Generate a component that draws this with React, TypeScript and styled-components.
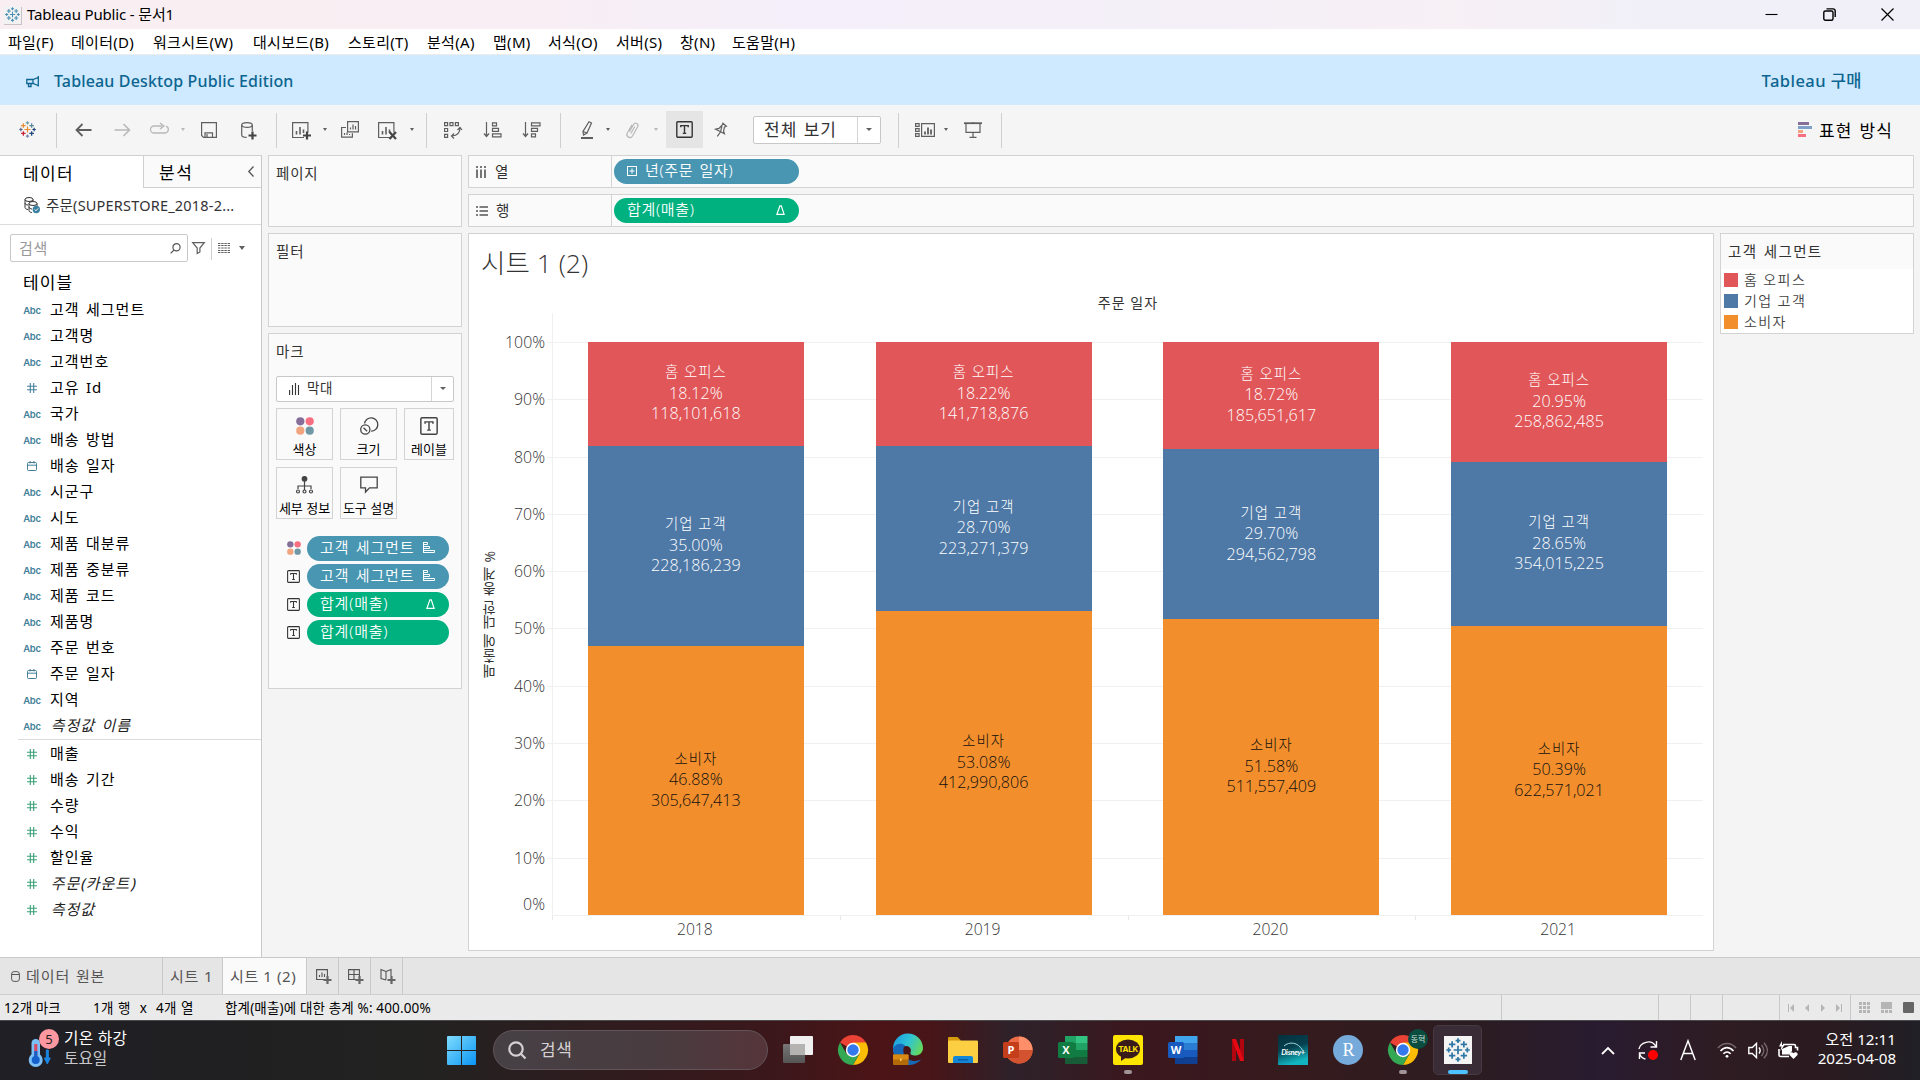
import React from "react";
import styled, { createGlobalStyle, css } from "styled-components";

const UI = `"Noto Sans", "Noto Sans CJK KR", sans-serif`;
const LIGHT = `"Open Sans", "Noto Sans CJK KR", sans-serif`;

const Global = createGlobalStyle`
  * { box-sizing: border-box; }
  body { margin: 0; overflow: hidden; background: #f4f4f4; font-family: ${UI}; }
  svg { display: block; flex: none; overflow: visible; }
`;

const Screen = styled.div`
  width: 1920px; height: 1080px; display: flex; flex-direction: column;
  overflow: hidden; background: #f4f4f4; color: #000;
`;

const Label = styled.span<{ $size?: number; $ls?: number; $ws?: number; $color?: string; $ml?: number; $up?: number; $weight?: number; $italic?: boolean }>`
  font-size: ${p => p.$size ?? 15}px;
  line-height: 1;
  height: 1em;
  white-space: pre;
  flex: none;
  letter-spacing: ${p => p.$ls ?? 0}px;
  word-spacing: ${p => p.$ws ?? 0}px;
  color: ${p => p.$color ?? "inherit"};
  margin-left: ${p => p.$ml ?? 0}px;
  margin-bottom: ${p => p.$up ?? 0}px;
  font-weight: ${p => p.$weight ?? 400};
  ${p => p.$italic && css`transform: skewX(-14deg);`}
`;

/* ---------- window chrome ---------- */
const TitleBar = styled.header`
  height: 29px; flex: none; display: flex; align-items: center; justify-content: space-between;
  padding: 0 26px 0 3px;
  background: linear-gradient(90deg, #f9eef1 0, #f9eef3 500px, #f4effa 800px, #f4f0f8 1150px, #f7f0f5 1450px, #f1f0f8 1650px, #f1f0f8 100%);
`;
const Group = styled.div<{ $gap?: number; $pl?: number }>`
  display: flex; align-items: center; gap: ${p => p.$gap ?? 0}px; padding-left: ${p => p.$pl ?? 0}px;
`;
const AppTile = styled.div`
  width: 18px; height: 18px; background: #f2f2f2; box-shadow: 1px 1px 0 #c9c3c5;
  display: flex; align-items: center; justify-content: center;
`;
const MenuBar = styled.nav`
  height: 26px; flex: none; display: flex; align-items: center; padding-left: 8px;
  background: #fff; border-bottom: 1px solid #ececec;
`;
const MenuItem = styled.span<{ $w: number }>`
  width: ${p => p.$w}px; flex: none; font-size: 15px; line-height: 24px; letter-spacing: 0.3px; white-space: nowrap;
`;
const Banner = styled.div`
  height: 50px; flex: none; display: flex; align-items: center; justify-content: space-between;
  padding: 2px 58px 0 26px; background: #cfe9fe; color: #0b6590;
`;

/* ---------- toolbar ---------- */
const Toolbar = styled.div`
  height: 50px; flex: none; display: flex; align-items: center; background: #f5f5f5; padding-bottom: 1px;
`;
const Tool = styled.div<{ $ml: number; $dim?: boolean; $y?: number }>`
  flex: none; margin-left: ${p => p.$ml}px; color: ${p => (p.$dim ? "#b8b8b8" : "#5f5f5f")};
  padding-top: ${p => p.$y ?? 0}px;
`;
const Rule = styled.i<{ $ml: number; $h?: number }>`
  width: 1px; height: ${p => p.$h ?? 35}px; margin-left: ${p => p.$ml}px; background: #cfcfcf; flex: none;
  margin-top: 2px;
`;
const Caret = styled.i<{ $ml?: number; $dim?: boolean; $s?: number }>`
  width: 0; height: 0; flex: none; margin-left: ${p => p.$ml ?? 0}px;
  border: ${p => p.$s ?? 2.5}px solid transparent; border-bottom: 0;
  border-top: ${p => (p.$s ?? 2.5) + 0.5}px solid ${p => (p.$dim ? "#b8b8b8" : "#5f5f5f")};
`;
const ActiveTool = styled.div`
  width: 37px; height: 37px; margin-left: 8px; background: #e5e5e5; flex: none;
  display: flex; align-items: center; justify-content: center; color: #333;
`;
const Combo = styled.div<{ $w: number; $h: number; $ml?: number; $mt?: number; $cell: number }>`
  width: ${p => p.$w}px; height: ${p => p.$h}px; margin-left: ${p => p.$ml ?? 0}px; margin-top: ${p => p.$mt ?? 0}px; flex: none;
  display: flex; justify-content: space-between; background: #fff; border: 1px solid #c8c8c8; border-radius: 2px; color: #333;
  & > div:last-child { width: ${p => p.$cell}px; border-left: 1px solid #d4d4d4; display: flex; align-items: center; justify-content: center; }
`;

/* ---------- workspace ---------- */
const Workspace = styled.main`
  height: 802px; flex: none; display: flex;
`;
const Side = styled.aside`
  width: 262px; flex: none; background: #fff; border-right: 1px solid #c9c9c9; border-top: 1px solid #d0d0d0;
  display: flex; flex-direction: column;
`;
const SideTabs = styled.div`
  height: 32px; flex: none; display: flex;
`;
const SideTab = styled.div<{ $active?: boolean; $w: number }>`
  width: ${p => p.$w}px; display: flex; align-items: center; justify-content: space-between; padding: 2px 7px 0 ${p => (p.$active ? 23 : 15)}px;
  ${p => !p.$active && css`background: #fafafa; border-left: 1px solid #d0d0d0; border-bottom: 1px solid #d0d0d0;`}
  svg { color: #555; margin-bottom: 3px; }
`;
const SourceRow = styled.div`
  height: 37px; flex: none; display: flex; align-items: center; padding: 0 0 2px 24px; gap: 6px; border-bottom: 1px solid #dcdcdc; color: #333;
`;
const SearchRow = styled.div`
  height: 28px; margin: 9px 0 0 10px; flex: none; display: flex; align-items: center;
`;
const SearchBox = styled.div`
  width: 178px; height: 28px; border: 1px solid #c8c8c8; border-radius: 2px; padding: 0 6px 0 8px;
  display: flex; align-items: center; justify-content: space-between; color: #555;
`;
const TableHead = styled.div`
  height: 35px; flex: none; padding: 10px 0 0 23px;
`;
const FieldRow = styled.div`
  height: 26px; flex: none; display: flex; align-items: center;
`;
const FieldIcon = styled.div`
  width: 50px; padding-left: 14px; display: flex; justify-content: center; flex: none;
`;
const Abc = styled.span`
  font: 600 9.5px/10px "Inter", sans-serif; color: #447f99; letter-spacing: -0.3px; padding-top: 1px;
`;
const Divider = styled.i`
  height: 1px; margin: 0 0 1px 18px; background: #dcdcdc; flex: none;
`;

const Cards = styled.section`
  width: 194px; margin-left: 6px; flex: none; display: flex; flex-direction: column; gap: 6px;
`;
const Card = styled.div<{ $h: number }>`
  height: ${p => p.$h}px; flex: none; border: 1px solid #d3d3d3; background: #fafafa; color: #333;
  display: flex; flex-direction: column; align-items: flex-start; padding: 10px 0 0 7px;
`;
const MarkGrid = styled.div`
  display: grid; grid-template-columns: 57px 57px 50px; grid-auto-rows: 52px; gap: 7px; margin: 6px 0 17px;
`;
const MarkButton = styled.div`
  border: 1px solid #d3d3d3; display: flex; flex-direction: column; align-items: center; justify-content: space-between; padding: 8px 0 3px; color: #444;
`;
const Encodings = styled.div`
  display: flex; flex-direction: column; gap: 3px; padding-left: 11px;
`;
const Encoding = styled.div`
  display: grid; grid-template-columns: 20px 142px; align-items: center;
`;
const Pill = styled.div<{ $green?: boolean; $w: number }>`
  width: ${p => p.$w}px; height: 25px; border-radius: 13px; padding: 0 12px 2px 13px;
  background: ${p => (p.$green ? "#00b180" : "#4996b2")}; color: #fff;
  display: flex; align-items: center; justify-content: space-between;
`;
const PillMark = styled.div`
  margin-right: 2px; padding-top: 1px;
`;

const Canvas = styled.section`
  margin-left: 6px; width: 1446px; flex: none; display: flex; flex-direction: column; gap: 6px;
`;
const Shelf = styled.div`
  height: 33px; flex: none; border: 1px solid #d3d3d3; background: #fafafa; display: flex; align-items: center; color: #333;
`;
const ShelfName = styled.div`
  width: 143px; height: 100%; border-right: 1px solid #d3d3d3; display: flex; align-items: center; gap: 9px; padding-left: 7px; margin-right: 2px;
  svg { color: #555; }
`;
const VizRow = styled.div`
  display: flex; gap: 6px; align-items: flex-start;
`;
const Viz = styled.div`
  width: 1246px; height: 718px; border: 1px solid #d3d3d3; background: #fff; flex: none;
  display: flex; flex-direction: column; font-family: ${LIGHT};
`;
const VizTitle = styled.h1`
  margin: 9px 0 1px 12px; height: 40px; font: 300 26.5px/40px ${LIGHT}; color: #333; white-space: pre;
`;
const ColumnHeader = styled.div`
  height: 29px; padding: 8px 0 0 84px; width: 1234px; text-align: center; font-size: 14px; line-height: 22px; letter-spacing: 1.1px; color: #333;
`;
const ChartRow = styled.div`
  display: flex; height: 602px;
`;
const AxisTitle = styled.div`
  width: 30px; margin-left: 6px; writing-mode: vertical-rl; transform: rotate(180deg); text-align: center; line-height: 30px;
  font-size: 14px; letter-spacing: .65px; color: #333;
`;
const AxisLabels = styled.div`
  width: 40px; height: 602px; display: flex; flex-direction: column; padding-top: 1px; text-align: right;
  font-weight: 300; font-size: 15.9px; color: #333;
`;
const AxisLabel = styled.div<{ $last?: boolean }>`
  height: 57.3px; line-height: 57.3px; margin-top: ${p => (p.$last ? -11 : 0)}px; flex: none;
`;
const Plot = styled.div`
  width: 1156px; margin-left: 2px; height: 602px; padding: 29px 0 0 5px; flex: none;
  background:
    linear-gradient(#f0f0f0, #f0f0f0) 5px 0 / 1px 100% no-repeat,
    repeating-linear-gradient(180deg, #f0f0f0 0, #f0f0f0 1px, transparent 1px, transparent 57.3px) 0 29px / 100% 100% no-repeat;
`;
const Bars = styled.div`
  display: grid; grid-template-columns: repeat(4, 1fr); height: 573px; width: 1151px;
`;
const Stack = styled.div`
  width: 216px; justify-self: center; display: flex; flex-direction: column;
`;
const Segment = styled.div<{ $c: string; $dark?: boolean; $pct: number }>`
  flex: ${p => p.$pct} 0 0; background: ${p => p.$c}; color: ${p => (p.$dark ? "#111" : "#fff")};
  display: flex; flex-direction: column; align-items: center; justify-content: center;
  font-weight: 300; font-size: 16.1px; line-height: 20.5px;
  span { font-size: 14.4px; letter-spacing: 1px; }
  div:last-child { margin-bottom: 2px; }
`;
const Years = styled.div`
  display: grid; grid-template-columns: repeat(4, 1fr); margin-left: 83px; width: 1151px; border-top: 1px solid #f0f0f0;
`;
const Year = styled.div`
  text-align: center; font-weight: 300; font-size: 15.7px; line-height: 26px; color: #333; padding-right: 2px;
  background: linear-gradient(#e8e8e8, #e8e8e8) 0 0 / 1px 4px no-repeat;
`;
const Legend = styled.div`
  width: 194px; height: 101px; border: 1px solid #d3d3d3; background: #fff; flex: none; color: #333;
`;
const LegendHead = styled.div`
  height: 35px; background: #fafafa; padding: 0 0 0 7px; display: flex; align-items: center;
`;
const LegendItem = styled.div`
  height: 21px; display: flex; align-items: center; padding-left: 3px; gap: 6px;
`;
const Swatch = styled.i<{ $c: string }>`
  width: 14px; height: 14px; background: ${p => p.$c}; flex: none;
`;

/* ---------- sheet tabs & status ---------- */
const SheetTabs = styled.div`
  height: 37px; flex: none; display: flex; background: #e5e5e5; border-top: 1px solid #c9c9c9;
`;
const SheetTab = styled.div<{ $w: number; $active?: boolean; $pl?: number }>`
  width: ${p => p.$w}px; padding: 0 0 0 ${p => p.$pl ?? 0}px; border-right: 1px solid #c9c9c9; flex: none;
  background: ${p => (p.$active ? "#fafafa" : "transparent")}; color: #555; display: flex; align-items: center; gap: 6px;
`;
const Status = styled.div`
  height: 26px; flex: none; display: flex; align-items: center; background: #eaeaea; border-top: 1px solid #cfcfcf; padding-left: 4px;
`;
const StatusCell = styled.div<{ $w: number; $line?: boolean }>`
  width: ${p => p.$w}px; height: 100%; flex: none; display: flex; align-items: center;
  ${p => p.$line && css`border-left: 1px solid #c9c9c9;`}
`;

/* ---------- taskbar ---------- */
const Taskbar = styled.footer`
  height: 60px; flex: none; display: flex; align-items: center; border-top: 1px solid #4a4a4c; color: #fff; padding-bottom: 1px;
  background: linear-gradient(90deg, #201f26 0, #202022 200px, #222221 420px, #2c1d1f 560px, #3c171b 780px, #4c1416 880px, #481518 930px, #2f2129 1010px, #302028 1040px, #3b171e 1130px, #341b1e 1320px, #2b1c22 1480px, #291b30 1600px, #2e1c22 1720px, #2a1b20 1830px, #202026 1920px);
`;
const Weather = styled.div`
  width: 447px; flex: none; padding-left: 26px; display: flex; align-items: center; gap: 4px;
`;
const TwoLine = styled.div<{ $right?: boolean }>`
  display: flex; flex-direction: column; gap: 4.5px; padding-bottom: 2px; align-items: ${p => (p.$right ? "flex-end" : "flex-start")};
`;
const SearchPill = styled.div`
  width: 275px; height: 40px; margin-left: 17px; flex: none; border-radius: 20px; border: 1px solid #62545a;
  background: linear-gradient(90deg, #464044, #493c40 60%, #55353a); display: flex; align-items: center; padding-left: 14px; gap: 14px; color: #d5d0d2;
`;
const TaskIcons = styled.div`
  display: flex; margin-left: 2px; flex: none;
`;
const TaskIcon = styled.div<{ $active?: boolean }>`
  width: 49px; height: 50px; margin: 0 3px; border-radius: 5px; display: grid; place-items: center; position: relative;
  ${p => p.$active && css`background: #3a2c36; border: 1px solid #463941;`}
`;
const Running = styled.i<{ $on?: boolean }>`
  position: absolute; bottom: ${p => (p.$on ? 0 : 1)}px; left: 50%; transform: translateX(-50%);
  width: ${p => (p.$on ? 20 : 8)}px; height: 4px; border-radius: 2px; background: ${p => (p.$on ? "#4cc2ff" : "#a09498")};
`;
const Badge = styled.span`
  position: absolute; right: -1px; top: 4px; width: 20px; height: 20px; border-radius: 50%; background: #0a4d40; color: #cfe0dc;
  font-size: 8px; line-height: 20px; text-align: center;
`;
const Tray = styled.div`
  flex: 1; display: flex; align-items: center; justify-content: flex-end; padding-right: 24px;
`;
const TrayItem = styled.div<{ $w: number }>`
  width: ${p => p.$w}px; flex: none; display: flex;
`;

/* ---------- drawings ---------- */
const S = (p: { w: number; h: number; children: React.ReactNode; sw?: number }) => (
  <svg width={p.w} height={p.h} viewBox={`0 0 ${p.w} ${p.h}`} fill="none" stroke="currentColor" strokeWidth={p.sw ?? 1.2}>{p.children}</svg>
);

const PLUSES: [number, number, number, string][] = [
  [9, 9, 3.2, "#eb8a30"], [9, 2, 1.8, "#7199a6"], [9, 16, 1.8, "#7b84ae"], [2, 9, 1.8, "#5b6591"], [16, 9, 1.8, "#1f447e"],
  [4.6, 4.8, 2.4, "#eb8a30"], [13.4, 4.8, 2.4, "#59879b"], [4.6, 13.2, 2.4, "#c72035"], [13.4, 13.2, 2.4, "#1f447e"],
];
const TableauMark = ({ size, mono }: { size: number; mono?: string }) => (
  <svg width={size} height={size} viewBox="0 0 18 18" strokeWidth="1.3">
    {PLUSES.map(([x, y, r, c], i) => <path key={i} stroke={mono ?? c} d={`M${x - r} ${y}h${2 * r}M${x} ${y - r}v${2 * r}`} />)}
  </svg>
);
const PlusGlyph = ({ x, y, r = 4, c = "#444" }: { x: number; y: number; r?: number; c?: string }) => (
  <path d={`M${x - r} ${y}h${2 * r}M${x} ${y - r}v${2 * r}`} stroke={c} strokeWidth="2.2" />
);
const TextMark = ({ s = 17 }: { s?: number }) => (
  <svg width={s} height={s} viewBox="0 0 17 17" fill="none" stroke="currentColor" strokeWidth="1.4">
    <rect x=".8" y=".8" width="15.4" height="15.4" rx="1" />
    <path d="M4.8 6.3V4.6h7.4v1.7M8.5 4.6v7.8M6.8 12.4h3.4" />
  </svg>
);
const ColorDots = ({ s = 18 }: { s?: number }) => (
  <svg width={s} height={s} viewBox="0 0 18 18">
    <circle cx="4.3" cy="4.3" r="4.1" fill="#856f99" /><circle cx="13.7" cy="4.3" r="4.1" fill="#f96f82" />
    <circle cx="4.3" cy="13.7" r="4.1" fill="#f2a47e" /><circle cx="13.7" cy="13.7" r="4.1" fill="#6f98a6" />
  </svg>
);
const Hash = ({ c }: { c: string }) => (
  <svg width="10" height="10" viewBox="0 0 10 10" stroke={c} strokeWidth="1.1"><path d="M3.3 0v10M6.7 0v10M0 3.3h10M0 6.7h10" /></svg>
);
const Calendar = () => (
  <svg width="10" height="10" viewBox="0 0 10 10" stroke="#447f99" fill="none"><rect x=".5" y="1.5" width="9" height="8" rx="1" /><path d="M.5 4.2h9M3 0v2.5M7 0v2.5" /></svg>
);
const Delta = () => <PillMark><S w={9} h={10} sw={1.2}><path d="M.9 9.4h7.2L5.3.8H3.9z" /></S></PillMark>;
const SortGlyph = () => <PillMark as="div"><S w={12} h={11} sw={1}><path d="M.5.5h4v2h-4zM.5 4.5h6v2h-6zM.5 8.5h11v2h-11zM.5 0v11" /></S></PillMark>;
const SheetGlyph = () => <><path d="M12 15.5H.6V.6h15.3v10" /><path d="M4.5 12.5V9M8 12.5V5M11.5 11V7.5" strokeWidth="1.6" /></>;

const Chrome = () => (
  <svg width="30" height="30" viewBox="0 0 30 30">
    <path d="M15 15 2 7.5A15 15 0 0 1 28 7.5z" fill="#ea4335" /><path d="M28 7.5A15 15 0 0 1 15 30l6.5-11.3L15 7.5z" fill="#fbbc05" />
    <path d="M15 30A15 15 0 0 1 2 7.5l6.5 11.3L15 22l6.2-3z" fill="#34a853" />
    <circle cx="15" cy="15" r="7.2" fill="#fff" /><circle cx="15" cy="15" r="5.7" fill="#3478ee" />
  </svg>
);
const Letter = styled.text`
  font: 700 11px "Open Sans", sans-serif; fill: #fff; text-anchor: middle;
`;
const OfficeIcon = ({ letter, tones, tile, round }: { letter: string; tones: string[]; tile: string; round?: boolean }) => (
  <svg width="30" height="28" viewBox="0 0 30 28">
    {round ? <>
      <circle cx="16" cy="14" r="13.6" fill={tones[0]} /><path d="M16 .4A13.6 13.6 0 0 1 29.6 14H16z" fill={tones[1]} />
      <path d="M2.4 14a13.6 13.6 0 0 0 27.2 0z" fill={tones[2]} />
    </> : tones.map((t, i) => <rect key={i} x="7" y={i * 7} width="22.5" height="7" fill={t} />)}
    {!round && letter === "X" && <><rect x="7" y="0" width="11" height="7" fill="#21a366" /><rect x="7" y="7" width="11" height="7" fill="#107c41" /></>}
    <rect x="0" y="6" width="16" height="16" rx="1.5" fill={tile} />
    <Letter x="8" y="18">{letter}</Letter>
  </svg>
);

/* ---------- data ---------- */
type Kind = "abc" | "num" | "date";
const DIMENSIONS: [string, Kind, boolean?][] = [
  ["고객 세그먼트", "abc"], ["고객명", "abc"], ["고객번호", "abc"], ["고유 Id", "num"], ["국가", "abc"], ["배송 방법", "abc"],
  ["배송 일자", "date"], ["시군구", "abc"], ["시도", "abc"], ["제품 대분류", "abc"], ["제품 중분류", "abc"], ["제품 코드", "abc"],
  ["제품명", "abc"], ["주문 번호", "abc"], ["주문 일자", "date"], ["지역", "abc"], ["측정값 이름", "abc", true],
];
const MEASURES: [string, boolean?][] = [["매출"], ["배송 기간"], ["수량"], ["수익"], ["할인율"], ["주문(카운트)", true], ["측정값", true]];
const RED = "#e15759", BLUE = "#4e79a7", ORANGE = "#f28e2b";
const YEARS = [
  { year: "2018", parts: [["18.12", "118,101,618"], ["35.00", "228,186,239"], ["46.88", "305,647,413"]] },
  { year: "2019", parts: [["18.22", "141,718,876"], ["28.70", "223,271,379"], ["53.08", "412,990,806"]] },
  { year: "2020", parts: [["18.72", "185,651,617"], ["29.70", "294,562,798"], ["51.58", "511,557,409"]] },
  { year: "2021", parts: [["20.95", "258,862,485"], ["28.65", "354,015,225"], ["50.39", "622,571,021"]] },
];
const SEGMENTS: [string, string][] = [["홈 오피스", RED], ["기업 고객", BLUE], ["소비자", ORANGE]];
const MENUS: [string, number][] = [
  ["파일(F)", 63], ["데이터(D)", 82], ["워크시트(W)", 100], ["대시보드(B)", 95], ["스토리(T)", 79], ["분석(A)", 66],
  ["맵(M)", 55], ["서식(O)", 68], ["서버(S)", 64], ["창(N)", 52], ["도움말(H)", 80],
];

const Field = ({ name, kind, italic, measure }: { name: string; kind: Kind; italic?: boolean; measure?: boolean }) => (
  <FieldRow>
    <FieldIcon>{kind === "abc" ? <Abc>Abc</Abc> : kind === "date" ? <Calendar /> : <Hash c={measure ? "#3aa078" : "#447f99"} />}</FieldIcon>
    <Label $size={15} $ls={1} $ws={1.5} $up={1.5} $italic={italic} $ml={italic ? 2 : 0} $color={italic ? "#222" : "#000"}>{name}</Label>
  </FieldRow>
);

const Sidebar = () => (
  <Side>
    <SideTabs>
      <SideTab $active $w={143}><Label $size={17} $ls={1.3}>데이터</Label></SideTab>
      <SideTab $w={118}>
        <Label $size={17} $ls={1.5}>분석</Label>
        <S w={6} h={11} sw={1.3}><path d="M5.5.5.8 5.5l4.7 5" /></S>
      </SideTab>
    </SideTabs>
    <SourceRow>
      <S w={16} h={16} sw={1}>
        <ellipse cx="5" cy="2.5" rx="4" ry="2" /><path d="M1 2.5v8c0 1 1.5 2 3 2M9 2.5V4" />
        <ellipse cx="9" cy="6.5" rx="4" ry="2" /><path d="M5 6.5v7c0 1.5 2 2 3 2M13 6.5V9M1 6c0 1 1.5 2 3 2M5 10c0 1 1.5 2 3 2" />
        <circle cx="12.3" cy="12.5" r="3.7" fill="#3b7f9f" stroke="none" /><path d="m10.6 12.5 1.3 1.3 2.3-2.4" stroke="#fff" />
      </S>
      <Label $size={14.5} $ls={0.2}>주문(SUPERSTORE_2018-2...</Label>
    </SourceRow>
    <SearchRow>
      <SearchBox>
        <Label $size={15} $ls={0.8} $color="#999">검색</Label>
        <S w={11} h={11}><circle cx="6.5" cy="4.3" r="3.6" /><path d="M4 7 .6 10.4" /></S>
      </SearchBox>
      <Tool $ml={4}><S w={13} h={12}><path d="M.7.6h11.600L7.9 6v4L5.2 11.5V6z" /></S></Tool>
      <Rule $ml={6} $h={22} />
      <Tool $ml={6}><S w={12} h={10} sw={1}><path d="M0 .5h12M0 2.5h12M0 5h12M0 7.5h12M0 9.5h12" strokeDasharray="2.4 .8" /></S></Tool>
      <Caret $ml={9} $s={3.5} />
    </SearchRow>
    <TableHead><Label $size={17} $ls={1.1}>테이블</Label></TableHead>
    {DIMENSIONS.map(([n, k, it]) => <Field key={n} name={n} kind={k} italic={it} />)}
    <Divider />
    {MEASURES.map(([n, it]) => <Field key={n} name={n} kind="num" italic={it} measure />)}
  </Side>
);

const MarksCards = () => (
  <Cards>
    <Card $h={72}><Label $size={14.5} $ls={0.8}>페이지</Label></Card>
    <Card $h={94}><Label $size={14.5} $ls={0.8}>필터</Label></Card>
    <Card $h={356}>
      <Label $size={14.5} $ls={0.8}>마크</Label>
      <Combo $w={178} $h={26} $cell={22} $mt={17}>
        <Group $gap={8} $pl={12}>
          <S w={10} h={12} sw={1.1}><path d="M.6 12V7M3.5 12V2M6.5 12V0M9.5 12V2" /></S>
          <Label $size={13.5} $ls={0.6}>막대</Label>
        </Group>
        <div><Caret $s={3} /></div>
      </Combo>
      <MarkGrid>
        <MarkButton><ColorDots /><Label $size={13} $color="#000">색상</Label></MarkButton>
        <MarkButton>
          <S w={18} h={18} sw={1.3}><path d="M4.5 6.5a6.7 6.7 0 1 1 6.6 7.7" /><circle cx="5.3" cy="12.5" r="4.6" /><path d="m3.5 10.7 3.6 3.6" /></S>
          <Label $size={13} $color="#000">크기</Label>
        </MarkButton>
        <MarkButton><TextMark s={18} /><Label $size={13} $color="#000">레이블</Label></MarkButton>
        <MarkButton>
          <S w={17} h={18}><circle cx="8.5" cy="2.8" r="2.3" fill="currentColor" /><path d="M8.5 5v9M2 13v-3h13v3" /><circle cx="2" cy="15.5" r="1.5" /><circle cx="8.5" cy="15.5" r="1.5" /><circle cx="15" cy="15.5" r="1.5" /></S>
          <Label $size={13} $color="#000">세부 정보</Label>
        </MarkButton>
        <MarkButton>
          <S w={18} h={18} sw={1.3}><path d="M.8 1.2h16.400v10.600H9.5L5.5 16v-4.200H.8z" /></S>
          <Label $size={13} $color="#000">도구 설명</Label>
        </MarkButton>
      </MarkGrid>
      <Encodings>
        <Encoding><ColorDots s={14} /><Pill $w={142}><Label $ls={0.9} $ws={1.5} $weight={350}>고객 세그먼트</Label><SortGlyph /></Pill></Encoding>
        <Encoding><TextMark s={13} /><Pill $w={142}><Label $ls={0.9} $ws={1.5} $weight={350}>고객 세그먼트</Label><SortGlyph /></Pill></Encoding>
        <Encoding><TextMark s={13} /><Pill $green $w={142}><Label $ls={0.8} $weight={350}>합계(매출)</Label><Delta /></Pill></Encoding>
        <Encoding><TextMark s={13} /><Pill $green $w={142}><Label $ls={0.8} $weight={350}>합계(매출)</Label></Pill></Encoding>
      </Encodings>
    </Card>
  </Cards>
);

const Chart = () => (
  <Viz>
    <VizTitle>시트 1 (2)</VizTitle>
    <ColumnHeader>주문 일자</ColumnHeader>
    <ChartRow>
      <AxisTitle>매출에 대한 총계 %</AxisTitle>
      <AxisLabels>
        {[100, 90, 80, 70, 60, 50, 40, 30, 20, 10, 0].map(v => <AxisLabel key={v} $last={v === 0}>{v}%</AxisLabel>)}
      </AxisLabels>
      <Plot>
        <Bars>
          {YEARS.map(y => (
            <Stack key={y.year}>
              {y.parts.map(([pct, total], i) => (
                <Segment key={i} $c={SEGMENTS[i][1]} $pct={Number(pct)} $dark={i === 2}>
                  <span>{SEGMENTS[i][0]}</span>
                  <div>{pct}%</div>
                  <div>{total}</div>
                </Segment>
              ))}
            </Stack>
          ))}
        </Bars>
      </Plot>
    </ChartRow>
    <Years>{YEARS.map(y => <Year key={y.year}>{y.year}</Year>)}</Years>
  </Viz>
);

const MainArea = () => (
  <Canvas>
    <Shelf>
      <ShelfName><S w={10} h={12} sw={1.6}><path d="M1 0v2M5 0v2M9 0v2M1 3.500V12M5 3.500V12M9 3.500V12" /></S><Label $size={14.5}>열</Label></ShelfName>
      <Pill $w={185}>
        <Group $gap={8}>
          <S w={10} h={10} sw={1}><rect x=".5" y=".5" width="9" height="9" /><path d="M2.500 5h5M5 2.500v5" /></S>
          <Label $size={15} $ls={0.7} $ws={1.5} $weight={350}>년(주문 일자)</Label>
        </Group>
      </Pill>
    </Shelf>
    <Shelf>
      <ShelfName><S w={12} h={10} sw={1.6}><path d="M0 1h2M0 5h2M0 9h2M3.500 1H12M3.500 5H12M3.500 9H12" /></S><Label $size={14.5} $ml={-1}>행</Label></ShelfName>
      <Pill $green $w={185}><Label $size={15} $ls={0.7} $weight={350}>합계(매출)</Label><Delta /></Pill>
    </Shelf>
    <VizRow>
      <Chart />
      <Legend>
        <LegendHead><Label $size={14.5} $ls={1.4} $ws={1}>고객 세그먼트</Label></LegendHead>
        {SEGMENTS.map(([n, c]) => <LegendItem key={n}><Swatch $c={c} /><Label $size={14} $ls={1.4} $color="#444" $weight={350}>{n}</Label></LegendItem>)}
      </Legend>
    </VizRow>
  </Canvas>
);

const ToolbarArea = () => (
  <Toolbar>
    <Tool $ml={19}><TableauMark size={17} /></Tool>
    <Rule $ml={20} />
    <Tool $ml={18}><S w={17} h={14} sw={1.8}><path d="M16.500 7H1.500M7.500 1 1.500 7l6 6" /></S></Tool>
    <Tool $ml={22} $dim><S w={17} h={14} sw={1.6}><path d="M.5 7h15M9.500 1l6 6-6 6" /></S></Tool>
    <Tool $ml={19} $dim><S w={19} h={14} sw={1.3}><path d="M12 3H4a3.500 3.500 0 0 0 0 7h11a3.500 3.500 0 0 0 1-6.800M10 0l4 3-4 3" /></S></Tool>
    <Caret $ml={12} $dim />
    <Tool $ml={16}><S w={16} h={16}><path d="M.6.6h14.800v14.800H2.600l-2-2zM4 15.400v-4.500h7.500v4.500M6 12v3" /></S></Tool>
    <Tool $ml={24} $y={2}><S w={16} h={18}><ellipse cx="6" cy="3" rx="5.300" ry="2.400" /><path d="M.7 3v10c0 1.500 2 2.400 5 2.400M11.300 3v6" /><PlusGlyph x={11.5} y={13.5} /></S></Tool>
    <Rule $ml={19} />
    <Tool $ml={15} $y={2}><S w={19} h={18}><SheetGlyph /><PlusGlyph x={15} y={13.5} /></S></Tool>
    <Caret $ml={12} />
    <Tool $ml={14}><S w={18} h={17}><path d="M6.600.6h10.800v10.200H6.600zM5 6.500H.6v9.700h10.800v-4M9.500 8.500V6.500M12 8.500V3.500M14.500 8.500V5M3.500 14v-2M6 14v-2.500M8.500 14v-1" /></S></Tool>
    <Tool $ml={19} $y={2}><S w={19} h={18}><SheetGlyph /><path d="m11.500 10 6.500 7M18 10l-6.500 7" stroke="#444" strokeWidth="2.200" /></S></Tool>
    <Caret $ml={13} />
    <Rule $ml={12} />
    <Tool $ml={17} $y={1}><S w={18} h={17}><path d="M.6.6h3v3h-3zM6 .6h3v3H6zM11.400.6h3v3h-3zM.6 6.500h3v3h-3zM.6 12.400h3v3h-3zM16 6c0 5-2 7.500-8 8M13.500 8 16 5.500 18 8M10 11.500 7.500 14l2.500 2.500" /></S></Tool>
    <Tool $ml={22}><S w={18} h={16}><path d="M2.500 0v14M0 11.500 2.500 14.500 5 11.500M8.500.8h4v3h-4zM8.500 6.300h6v3h-6zM8.500 11.800H17v3H8.500z" /></S></Tool>
    <Tool $ml={21}><S w={18} h={16}><path d="M2.500 0v14M0 11.500 2.500 14.500 5 11.500M8.500.8H17v3H8.500zM8.500 6.300h6v3h-6zM8.500 11.800h4v3h-4z" /></S></Tool>
    <Rule $ml={19} />
    <Tool $ml={20}><S w={12} h={18}><path d="M8 .8 10.500 2 6 12l-3.500 2L2 10.500zM2 10.500 6 12" /><path d="M0 17h12" strokeWidth="2" /></S></Tool>
    <Caret $ml={13} />
    <Tool $ml={16} $dim><S w={13} h={16}><path d="M3.500 9.500 7.500 2.500a2.300 2.300 0 0 1 4.200 2.200L6.500 14a3 3 0 0 1-5.300-2.800L6 2.800M4.800 11.500l4-7" /></S></Tool>
    <Caret $ml={15} $dim />
    <ActiveTool><TextMark s={17} /></ActiveTool>
    <Tool $ml={11}><S w={13} h={15}><path d="M8.300.7 12.400 4.200 10.400 5.200 9.600 9.300 10.400 11.800 6.700 9.700 3.300 14.300M6.700 9.700 1.600 7.200 5 6.400 8 3.200z" /></S></Tool>
    <Combo $ml={26} $w={128} $h={28} $cell={23}>
      <Group><Label $ml={10} $size={17} $ls={1} $ws={1}>전체 보기</Label></Group>
      <div><Caret $s={3} /></div>
    </Combo>
    <Rule $ml={17} />
    <Tool $ml={16}><S w={20} h={14}><path d="M.6.6h3.500v2.800H.6zM.6 5.600h3.500v2.800H.6zM.6 10.600h3.500v2.800H.6zM6.600.6h12.800v12.800H6.600z" /><path d="M10 11.500V8.500M13 11.500V4.500M16 11.500V6.500" strokeWidth="1.800" /></S></Tool>
    <Caret $ml={9} />
    <Tool $ml={16}><S w={18} h={16}><path d="M0 1.200h18" strokeWidth="1.800" /><path d="M2 1.500v8.800h14V1.500M9 10.500v5M5.500 15.400h7M9 0v1" /></S></Tool>
    <Rule $ml={19} />
    <Tool $ml={796}>
      <svg width="14" height="15"><rect width="11" height="3" fill="#856f99" /><rect y="4" width="14" height="3" fill="#7f9fc8" /><rect y="8" width="5" height="3" fill="#f2a47e" /><rect y="12" width="8" height="3" fill="#f96f82" /></svg>
    </Tool>
    <Label $ml={7} $size={17} $ls={1.1} $ws={1.5} $up={-1}>표현 방식</Label>
  </Toolbar>
);

const BottomBars = () => (
  <>
    <SheetTabs>
      <SheetTab $w={163} $pl={11}>
        <S w={9} h={11} sw={1}><rect x=".6" y=".6" width="7.800" height="9.800" rx="2.500" /><path d="M.6 3.500h7.800" /></S>
        <Label $size={15} $ls={0.9} $ws={1}>데이터 원본</Label>
      </SheetTab>
      <SheetTab $w={60} $pl={7}><Label $size={15} $ls={0.8}>시트 1</Label></SheetTab>
      <SheetTab $w={84} $active $pl={7}><Label $size={15} $ls={0.6}>시트 1 (2)</Label></SheetTab>
      <SheetTab $w={32} $pl={9}><S w={16} h={15} sw={1.1}><path d="M8 10.500H.6V.6h10.800V7M3.500 8V6M6 8V3.500M8.500 8V5" /><PlusGlyph x={11.5} y={11} c="#666" /></S></SheetTab>
      <SheetTab $w={32} $pl={9}><S w={16} h={15} sw={1.1}><path d="M8 10.500H.6V.6h10.800V7M.6 5.500h10.800M6 .6v9.900" /><PlusGlyph x={11.5} y={11} c="#666" /></S></SheetTab>
      <SheetTab $w={32} $pl={9}><S w={16} h={15} sw={1.1}><path d="M6 2.500v8M6 2.500 1 .6v9L6 11M6 2.500 11 .6V7" /><PlusGlyph x={11.5} y={11} c="#666" /></S></SheetTab>
    </SheetTabs>
    <Status>
      <StatusCell $w={89}><Label $size={13.5} $up={-2} $ls={0.1}>12개 마크</Label></StatusCell>
      <StatusCell $w={132}><Label $size={13.5} $up={-2} $ls={0.2} $ws={0.8}>1개 행  x  4개 열</Label></StatusCell>
      <StatusCell $w={1276}><Label $size={13.5} $up={-2} $ls={0.15}>합계(매출)에 대한 총계 %: 400.00%</Label></StatusCell>
      <StatusCell $w={157} $line /><StatusCell $w={32} $line /><StatusCell $w={32} $line /><StatusCell $w={57} $line />
      <StatusCell $w={71} $line>
        <svg width="70" height="8" viewBox="0 0 70 8" fill="#b5b5b5"><path d="M8 0h1v8H8zM14 0v8l-4-4zM29 0v8l-4-4zM41 0v8l4-4zM56 0v8l4-4zM61 0h1v8h-1z" /></svg>
      </StatusCell>
      <StatusCell $w={70} $line>
        <svg width="66" height="12" viewBox="0 0 66 12" fill="#b5b5b5">
          {[0, 1, 2].map(r => [0, 1, 2].map(c => <rect key={`${r}${c}`} x={8 + c * 4} y={r * 4} width="3" height="3" />))}
          <rect x="30" y="0" width="11" height="7" /><rect x="30" y="8" width="3" height="3" /><rect x="34" y="8" width="3" height="3" /><rect x="38" y="8" width="3" height="3" />
          <rect x="52" y="0" width="11" height="11" rx="1" fill="#666" />
        </svg>
      </StatusCell>
    </Status>
  </>
);

const Desktop = () => (
  <Taskbar>
    <Weather>
      <svg width="34" height="40" viewBox="0 0 34 40">
        <rect x="5.500" y="9" width="8.500" height="22" rx="4.200" fill="#7cc0f8" /><circle cx="9.700" cy="30" r="7" fill="#7cc0f8" />
        <rect x="8.200" y="14" width="3.200" height="14" fill="#d94b63" /><circle cx="9.700" cy="30" r="4" fill="#1560cc" /><rect x="8.200" y="21" width="3.200" height="8" fill="#1560cc" />
        <path d="M20.300 20h2v8h2l-3 6-3-6h2z" fill="#1c86e0" stroke="#1c86e0" />
        <circle cx="23" cy="9" r="10" fill="#fd97a0" />
        <text x="23" y="13.500" fontSize="13" textAnchor="middle" fill="#222" fontFamily="Noto Sans">5</text>
      </svg>
      <TwoLine>
        <Label $size={15.7} $ls={0.3}>기온 하강</Label>
        <Label $size={15.7} $color="#c9c8ca">토요일</Label>
      </TwoLine>
    </Weather>
    <svg width="29" height="29" viewBox="0 0 29 29">
      <defs><linearGradient id="win" x1="0" y1="0" x2="1" y2="1"><stop offset="0" stopColor="#7fdcfd" /><stop offset="1" stopColor="#0a94f4" /></linearGradient></defs>
      <path d="M0 1q0-1 1-1h13v14H0zM15 0h13q1 0 1 1v13H15zM0 15h14v14H1q-1 0-1-1zM15 15h14v13q0 1-1 1H15z" fill="url(#win)" />
    </svg>
    <SearchPill>
      <S w={18} h={18} sw={2.2}><circle cx="8" cy="8" r="6.700" /><path d="m12.800 12.800 4.700 4.700" /></S>
      <Label $size={17} $ls={0.6} $up={1}>검색</Label>
    </SearchPill>
    <TaskIcons>
      <TaskIcon><svg width="30" height="28"><defs><linearGradient id="tv" x1="0" y1="0" x2="0" y2="1"><stop offset="0" stopColor="#777" /><stop offset="1" stopColor="#555" /></linearGradient></defs><rect y="8" width="22" height="19" rx="1" fill="url(#tv)" /><rect x="7" y="0" width="23" height="19" rx="1" fill="#efefef" /><rect x="7" y="8" width="15" height="11" fill="#b5b2b2" /></svg></TaskIcon>
      <TaskIcon><Chrome /></TaskIcon>
      <TaskIcon>
        <svg width="30" height="30" viewBox="0 0 30 30">
          <defs><linearGradient id="edge" x1="0" y1=".2" x2="1" y2=".6"><stop offset="0" stopColor="#1b9de2" /><stop offset=".5" stopColor="#2fc3d6" /><stop offset="1" stopColor="#66d95b" /></linearGradient></defs>
          <path d="M0 14A15 15 0 0 1 30 13c0 5-4 7.500-8 7.500-3 0-5-1-4.500-3 1-2 .5-6-4-6.500C8 11 5 15 6 21L1 19z" fill="url(#edge)" />
          <path d="M0 13c3-5 9-5.500 12-2.500-1.500 1.500-2 4-1.500 7 1 6 7 8.500 11.500 8.500 2.500 0 4.500-.8 6-2-2.500 4-7.500 6-13 6C6 30 0 22 0 13z" fill="#1668b8" />
          <rect x="0" y="19.500" width="15.500" height="10.500" rx="1" fill="#b56a0a" /><rect x="0" y="19.500" width="15.500" height="5" fill="#d98a14" /><rect x="7" y="23.500" width="1.600" height="2.400" fill="#ffd560" />
        </svg>
      </TaskIcon>
      <TaskIcon><svg width="30" height="26"><path d="M0 1q0-1 1-1h8.500l3 3v8H0z" fill="#d79b0c" /><rect y="3.500" width="30" height="22.500" rx="1" fill="#fccf43" /><path d="M5 26v-5q0-2 2-2h16q2 0 2 2v5z" fill="#1287d8" /><rect x="10" y="22" width="10" height="1.500" fill="#0b5ea8" /></svg></TaskIcon>
      <TaskIcon><OfficeIcon letter="P" tones={["#ed6c47", "#ff8f6b", "#d35230"]} tile="#c43e1c" round /></TaskIcon>
      <TaskIcon><OfficeIcon letter="X" tones={["#33c481", "#21a366", "#107c41", "#185c37"]} tile="#107c41" /></TaskIcon>
      <TaskIcon>
        <svg width="30" height="30"><rect width="30" height="30" rx="2" fill="#fee500" /><ellipse cx="15" cy="14" rx="12" ry="9.500" fill="#391b1b" /><path d="m8 20 0 6 6-4z" fill="#391b1b" /><text x="15" y="17" textAnchor="middle" fontSize="8" fontWeight="700" fontFamily="Inter" fill="#fee500" letterSpacing="-.3">TALK</text></svg>
        <Running />
      </TaskIcon>
      <TaskIcon><OfficeIcon letter="W" tones={["#41a5ee", "#2b7cd3", "#185abd", "#103f91"]} tile="#185abd" /></TaskIcon>
      <TaskIcon><svg width="12" height="22" viewBox="0 0 12 22"><rect width="4" height="22" fill="#b1060f" /><rect x="8" width="4" height="22" fill="#b1060f" /><path d="M0 0h4l8 22H8z" fill="#e50914" /></svg></TaskIcon>
      <TaskIcon>
        <svg width="30" height="30"><defs><linearGradient id="dis" x1="0" y1="0" x2=".3" y2="1"><stop offset="0" stopColor="#06303c" /><stop offset=".5" stopColor="#06404f" /><stop offset="1" stopColor="#12b5bf" /></linearGradient></defs><rect width="30" height="30" fill="url(#dis)" /><path d="M6 11c5-4.500 14-4.500 19 5" stroke="#9fd5dc" fill="none" /><text x="15" y="19.500" textAnchor="middle" fontSize="7.500" fontStyle="italic" fontWeight="700" fontFamily="Lato" fill="#fff" letterSpacing="-.3">Disney+</text></svg>
      </TaskIcon>
      <TaskIcon><svg width="30" height="30"><circle cx="15" cy="15" r="15" fill="#75aadb" /><text x="15.500" y="21" textAnchor="middle" fontSize="18" fontFamily="Liberation Serif" fill="#fff">R</text></svg></TaskIcon>
      <TaskIcon><Chrome /><Badge>동혁</Badge><Running /></TaskIcon>
      <TaskIcon $active><svg width="28" height="28" viewBox="0 0 28 28"><rect width="28" height="28" fill="#f4f4f4" /><g transform="translate(2 2)"><TableauMark size={24} mono="#2f78a5" /></g></svg><Running $on /></TaskIcon>
    </TaskIcons>
    <Tray>
      <TrayItem $w={37}><S w={14} h={9} sw={1.8}><path d="m1 8 6-6 6 6" /></S></TrayItem>
      <TrayItem $w={42.5}><S w={20} h={20} sw={1.4}><path d="M1 9C2 3 13-2 18 6.500M18.500 1v6h-6M1.500 19v-6h5.500M1.500 13.500c1 3 3 5 6 5.500" /><circle cx="15" cy="15" r="5" fill="#f00" stroke="none" /></S></TrayItem>
      <TrayItem $w={38}><S w={16} h={20} sw={1.5}><path d="M.8 20 8 .8 15.200 20M3.500 13.500h9" /></S></TrayItem>
      <TrayItem $w={29.5}><S w={18} h={15} sw={1.6}><path d="M0 5c5-6 13-6 18 0" stroke="#77686e" /><path d="M2.500 8c4-4.500 9-4.500 13 0M5.300 10.800c2.500-2.500 5-2.500 7.400 0" /><circle cx="9" cy="13.300" r="1.400" fill="#fff" stroke="none" /></S></TrayItem>
      <TrayItem $w={30}><S w={20} h={17} sw={1.4}><path d="M.8 5.500h3.500L8.500 1.500v14L4.300 11.500H.8zM11 5.500c1.500 2 1.500 4 0 6" /><path d="M13.500 3c3 3.500 3 7.500 0 11M16 .8c4.500 5 4.500 10.500 0 15.500" stroke="#77686e" /></S></TrayItem>
      <TrayItem $w={40}><S w={21} h={18} sw={1.6}><path d="M5 3.500h11q1.500 0 1.500 1.500v1.500h2v3M11 15.500H2.500Q1 15.500 1 14V8" /><path d="M4 0 1 5.500h2.500L2.500 10 6.500 4H4zM4 13.500V8l7-3h3v5l-3 3.500z" fill="#fff" stroke="none" /><path d="m15.500 18-4-4c-1-2.500 2.500-4 4-1.800 1.500-2.200 5-.7 4 1.800z" fill="#fff" stroke="none" /></S></TrayItem>
      <TwoLine $right>
        <Label $size={15.2}>오전 12:11</Label>
        <Label $size={15.2} $ls={-0.1}>2025-04-08</Label>
      </TwoLine>
    </Tray>
  </Taskbar>
);

export default function App() {
  return (
    <Screen>
      <Global />
      <TitleBar>
        <Group $gap={6}>
          <AppTile><TableauMark size={15} mono="#4a8fb5" /></AppTile>
          <Label $size={15} $ls={-0.15}>Tableau Public - 문서1</Label>
        </Group>
        <Group $gap={45}>
          <S w={13} h={12} sw={1.1}><path d="M.500 5.500h12" /></S>
          <S w={13} h={13} sw={1.4}><rect x=".8" y="3" width="9.200" height="9.200" rx="1.500" /><path d="M3.500.9H10q2.200 0 2.200 2.200v6" /></S>
          <S w={13} h={13} sw={1.2}><path d="m.5.5 12 12M12.500.5l-12 12" /></S>
        </Group>
      </TitleBar>
      <MenuBar>{MENUS.map(([m, w]) => <MenuItem key={m} $w={w}>{m}</MenuItem>)}</MenuBar>
      <Banner>
        <Group $gap={15}>
          <S w={13} h={11} sw={1.3}><path d="M12.300 0v10.500M12 1.500 7 3.500H.8v4H7l5 2M2.500 7.500v3H5v-3M7 3.500v4" /></S>
          <Label $size={16} $ls={0.15} $weight={500}>Tableau Desktop Public Edition</Label>
        </Group>
        <Label $size={16.5} $ls={0.45} $weight={500}>Tableau 구매</Label>
      </Banner>
      <ToolbarArea />
      <Workspace>
        <Sidebar />
        <MarksCards />
        <MainArea />
      </Workspace>
      <BottomBars />
      <Desktop />
    </Screen>
  );
}
